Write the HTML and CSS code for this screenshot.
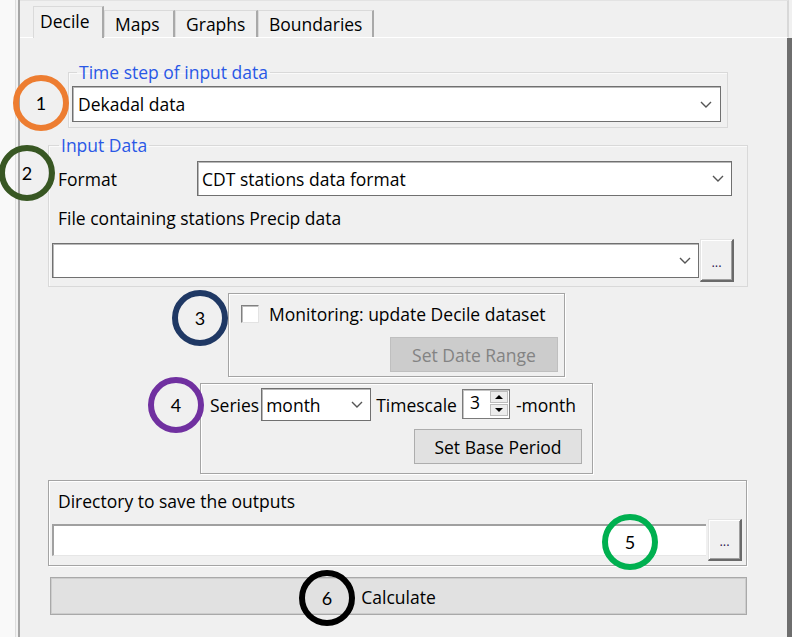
FILE: index.html
```html
<!DOCTYPE html>
<html>
<head>
<meta charset="utf-8">
<link rel="stylesheet" href="styles.css">
</head>
<body>
<div class="window">
  <div class="tabbar">
    <div class="tab active t-decile">Decile</div>
    <div class="tab t-maps">Maps</div>
    <div class="tab t-graphs">Graphs</div>
    <div class="tab t-bound">Boundaries</div>
  </div>
  <div class="page">
    <fieldset class="group g1">
      <legend>Time step of input data</legend>
      <div class="combo">
        <span class="ctext">Dekadal data</span>
        <svg class="chev" width="12" height="7" viewBox="0 0 12 7"><polyline points="1,1 6,6 11,1"/></svg>
      </div>
    </fieldset>

    <fieldset class="group g2">
      <legend>Input Data</legend>
      <div class="row r-format">
        <span class="lbl">Format</span>
        <div class="combo c-format">
          <span class="ctext">CDT stations data format</span>
          <svg class="chev" width="12" height="7" viewBox="0 0 12 7"><polyline points="1,1 6,6 11,1"/></svg>
        </div>
      </div>
      <div class="lbl lbl-file">File containing stations Precip data</div>
      <div class="row r-file">
        <div class="combo c-file">
          <span class="ctext"></span>
          <svg class="chev" width="12" height="7" viewBox="0 0 12 7"><polyline points="1,1 6,6 11,1"/></svg>
        </div>
        <div class="dots">...</div>
      </div>
    </fieldset>

    <div class="frame g3">
      <div class="row r-check">
        <span class="checkbox"></span>
        <span class="check-text">Monitoring: update Decile dataset</span>
      </div>
      <div class="btn btn-disabled">Set Date Range</div>
    </div>

    <div class="frame g4">
      <div class="row r-series">
        <span class="s-lbl">Series</span>
        <div class="combo c-series">
          <span class="ctext">month</span>
          <svg class="chev" width="12" height="7" viewBox="0 0 12 7"><polyline points="1,1 6,6 11,1"/></svg>
        </div>
        <span class="ts-lbl">Timescale</span>
        <div class="spin">
          <span class="spin-val">3</span>
          <div class="spin-btns">
            <div class="spin-b"><span class="tri-up"></span></div>
            <div class="spin-b"><span class="tri-down"></span></div>
          </div>
        </div>
        <span class="mo-lbl">-month</span>
      </div>
      <div class="btn btn-base">Set Base Period</div>
    </div>

    <div class="frame g5">
      <div class="lbl">Directory to save the outputs</div>
      <div class="row r-dir">
        <div class="entry"></div>
        <div class="dots">...</div>
      </div>
    </div>

    <div class="calc">Calculate</div>
  </div>
</div>

<div class="mark m1">1</div>
<div class="mark m2">2</div>
<div class="mark m3">3</div>
<div class="mark m4">4</div>
<div class="mark m5">5</div>
<div class="mark m6">6</div>
</body>
</html>
```

FILE: styles.css
```css
* { box-sizing: border-box; }
html, body { margin: 0; padding: 0; }
body {
  position: relative;
  width: 792px;
  height: 637px;
  overflow: hidden;
  background: #f9f9f9;
  font-family: "Open Sans", "Noto Sans", sans-serif;
  font-size: 17.5px;
  color: #000;
}

.window {
  margin-left: 18px;
  width: 774px;
  height: 637px;
  border-left: 2px solid #a6a6a6;
  box-shadow: -2px 0 0 #f3f3f3, -3px 0 0 #dedede;
  background: #f0f0f0;
}

/* tabs */
.tabbar {
  height: 38px;
  border-top: 1px solid #e3e3e3;
  border-bottom: 1px solid #ffffff;
  border-right: 2px solid #d8d8d8;
  margin-right: 3px;
  display: flex;
  align-items: flex-end;
  padding-left: 13px;
}
.tab {
  height: 27px;
  line-height: 20px;
  padding-top: 3px;
  padding-left: 10px;
  border-top: 1px solid #dadada;
  border-left: 1px solid #dadada;
  border-right: 2px solid #a9a9a9;
  background: #f0f0f0;
  white-space: nowrap;
}
.tab.active {
  height: 32px;
  margin-bottom: -1px;
  padding-top: 4px;
  padding-left: 6px;
}
.t-decile { width: 71px; }
.t-maps { width: 71px; }
.t-graphs { width: 83px; }
.t-bound { width: 116px; }

.page {
  height: 599px;
  border-right: 5px solid #6e6e6e;
  display: flex;
  flex-direction: column;
  align-items: flex-start;
}

/* group boxes */
.group {
  margin: 0;
  border: 1px solid #d9d9d9;
  box-shadow: inset 1px 1px 0 #fafafa;
  min-width: 0;
}
.group legend {
  padding: 0 2px;
  line-height: 18px;
  color: #2a58e6;
}
.g1 {
  margin-top: 25px;
  margin-left: 48px;
  width: 660px;
  padding: 5px 6px 5px 3px;
}
.g1 legend { margin-left: 5px; }
.g2 {
  margin-top: 8px;
  margin-left: 28px;
  width: 700px;
  padding: 7px 15px 4px 3px;
}
.g2 legend { margin-left: 7px; }

.row { display: flex; align-items: center; }
.lbl { margin-left: 6px; line-height: 20px; white-space: nowrap; }
.lbl-file { margin-top: 12px; }
.r-file { margin-top: 11px; margin-right: -2px; }

/* combobox */
.combo {
  height: 36px;
  background: #fff;
  border: 1px solid #707070;
  box-shadow: inset 1px 1px 0 #b8b8b8;
  display: flex;
  align-items: center;
  padding: 0 8px 0 5px;
}
.ctext { flex: 1; white-space: nowrap; line-height: 20px; }
.chev { flex: none; }
.chev polyline { fill: none; stroke: #555; stroke-width: 1.4; }
.c-format { width: 535px; height: 35px; margin-left: auto; padding-left: 4px; padding-right: 7px; }
.c-file { flex: 1; height: 35px; padding-right: 7px; }

.dots {
  width: 34px;
  height: 43px;
  margin-left: 1px;
  background: #f0f0f0;
  border-top: 1px solid #e3e3e3;
  border-left: 1px solid #e3e3e3;
  border-right: 2px solid #6a6a6a;
  border-bottom: 2px solid #6a6a6a;
  box-shadow: inset 1px 1px 0 #fff, inset -1px -1px 0 #a0a0a0;
  display: flex;
  align-items: center;
  justify-content: center;
  font-size: 13px;
  line-height: 13px;
  color: #302050;
  padding-top: 4px;
}

/* etched frames */
.frame {
  border: 1px solid #a4a4a4;
  box-shadow: inset 1px 1px 0 #fff, 1px 1px 0 #fff;
  display: flex;
  flex-direction: column;
}
.g3 {
  margin-top: 6px;
  margin-left: 208px;
  width: 337px;
  padding: 9px 6px 4px 12px;
}
.r-check { height: 22px; }
.checkbox {
  width: 18px;
  height: 18px;
  background: #fff;
  border: 1px solid;
  border-color: #808080 #e3e3e3 #e3e3e3 #808080;
  box-shadow: inset 1px 1px 0 #bdbdbd;
}
.check-text { margin-left: 10px; white-space: nowrap; line-height: 20px; }

.btn {
  height: 35px;
  width: 168px;
  align-self: flex-end;
  display: flex;
  align-items: center;
  justify-content: center;
  white-space: nowrap;
}
.btn-disabled {
  margin-top: 12px;
  background: #cccccc;
  border: 1px solid #bfbfbf;
  color: #838383;
}
.btn-base {
  margin-top: 8px;
  background: #e1e1e1;
  border: 1px solid #adadad;
}

.g4 {
  margin-top: 6px;
  margin-left: 180px;
  width: 393px;
  padding: 4px 10px 9px 9px;
}
.r-series { height: 33px; white-space: nowrap; }
.c-series { width: 110px; height: 33px; margin-left: 2px; padding-left: 4px; padding-right: 7px; }
.ts-lbl { margin-left: 5px; }
.spin {
  margin-left: 5px;
  width: 48px;
  height: 30px;
  background: #fff;
  border: 1px solid #7a7a7a;
  box-shadow: inset 1px 1px 0 #c4c4c4;
  display: flex;
  align-items: center;
  padding-left: 7px;
  margin-top: -2px;
}
.spin-val { flex: 1; line-height: 20px; margin-top: -4px; }
.spin-btns { display: flex; flex-direction: column; gap: 1px; margin-right: 1px; }
.spin-b {
  width: 18px;
  height: 12px;
  background: #ececec;
  border: 1px solid #bcbcbc;
  display: flex;
  align-items: center;
  justify-content: center;
}
.tri-up, .tri-down { width: 0; height: 0; border-left: 4px solid transparent; border-right: 4px solid transparent; }
.tri-up { border-bottom: 4px solid #000; }
.tri-down { border-top: 4px solid #000; }
.mo-lbl { margin-left: 6px; }

.g5 {
  margin-top: 6px;
  margin-left: 28px;
  width: 699px;
  padding: 10px 4px 4px 3px;
}
.r-dir { margin-top: 8px; height: 42px; }
.entry {
  flex: 1;
  height: 32px;
  background: #fff;
  border-top: 2px solid #a0a0a0;
  border-left: 2px solid #a0a0a0;
  border-bottom: 1px solid #e6e6e6;
}
.r-dir .dots { margin-left: 2px; height: 42px; }

.calc {
  margin-top: 11px;
  margin-left: 30px;
  width: 697px;
  height: 38px;
  background: #e1e1e1;
  border: 1px solid #a9a9a9;
  box-shadow: inset 0 0 0 1px #cdcdcd;
  display: flex;
  align-items: center;
  justify-content: center;
  padding-top: 2px;
}

/* annotation circles */
.mark {
  position: absolute;
  width: 56px;
  height: 56px;
  border: 6px solid #000;
  border-radius: 50%;
  display: flex;
  align-items: center;
  justify-content: center;
  font-family: Lato, "Open Sans", sans-serif;
  font-size: 18px;
  color: #000;
}
.m1 { left: 13px; top: 75px; border-color: #ed7d31; }
.m2 { left: -1px; top: 145px; border-color: #385723; }
.m3 { left: 172px; top: 290px; border-color: #1f3864; }
.m4 { left: 148px; top: 377px; border-color: #7030a0; }
.m5 { left: 602px; top: 514px; border-color: #00b050; }
.m6 { left: 299px; top: 570px; border-color: #000000; }
```
